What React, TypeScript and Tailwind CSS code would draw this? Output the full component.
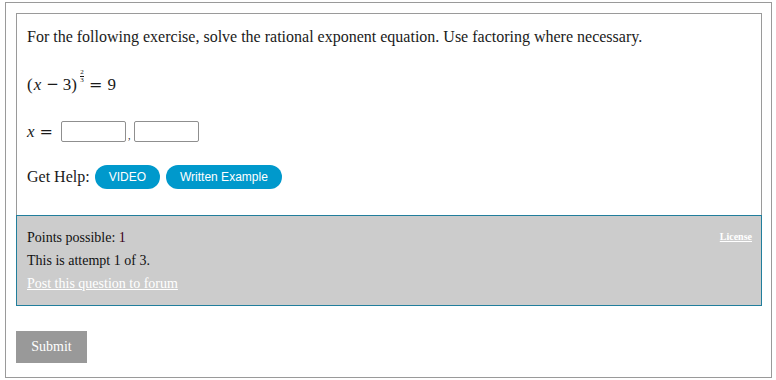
import React from "react";

export default function App() {
  return (
    <div className="bg-white w-[776px] h-[380px] pt-[2px] pl-[5px] font-['Liberation_Serif','Times_New_Roman',serif]">
      <div className="w-[767px] h-[376px] border border-[#9a9a9a] pt-[10px] pl-[10px]">
        <div className="w-[746px] border-t border-x border-[#9a9a9a]">
          <div className="px-[10px] pt-[14px] pb-[26px] text-[#1a1a1a]">
            <p className="text-[16px] leading-[18px] h-[18px] whitespace-nowrap">
              For the following exercise, solve the rational exponent equation. Use factoring where necessary.
            </p>

            {/* math line */}
            <div className="mt-[26px] h-[24px] flex items-center text-[17px] leading-[17px] whitespace-nowrap">
              <span>(</span>
              <span className="italic ml-[1px]">x</span>
              <span className="ml-[5px] text-[15px] font-['DejaVu_Serif',serif]">−</span>
              <span className="ml-[4px]">3</span>
              <span>)</span>
              <span className="ml-[3px] flex flex-col items-center -translate-y-[8px] text-[7px] leading-[7px]">
                <span>2</span>
                <span className="w-[4px] h-px bg-[#1a1a1a]" />
                <span>3</span>
              </span>
              <span className="ml-[5px] text-[16px] font-['DejaVu_Serif',serif]">=</span>
              <span className="ml-[5px]">9</span>
            </div>

            {/* answer line */}
            <div className="mt-[25px] h-[21px] flex items-center text-[17px] whitespace-nowrap">
              <span className="italic">x</span>
              <span className="ml-[5px] text-[16px] font-['DejaVu_Serif',serif]">=</span>
              <div className="ml-[8px] w-[65px] h-[21px] border border-[#8f8f8f] rounded-[2px] bg-white" />
              <span className="ml-[2px] self-end text-[10px] leading-[10px] mb-[1px]">,</span>
              <div className="ml-[4px] w-[65px] h-[21px] border border-[#8f8f8f] rounded-[2px] bg-white" />
            </div>

            {/* help line */}
            <div className="mt-[23px] h-[24px] flex items-center whitespace-nowrap">
              <span className="text-[16px] leading-[18px]">Get Help:</span>
              <button className="ml-[5px] h-[24px] px-[14px] rounded-full bg-[#0099cc] text-white text-[12px] leading-[24px] font-['Liberation_Sans',Arial,sans-serif]">
                VIDEO
              </button>
              <button className="ml-[6px] h-[24px] px-[14px] rounded-full bg-[#0099cc] text-white text-[12px] leading-[24px] font-['Liberation_Sans',Arial,sans-serif]">
                Written Example
              </button>
            </div>
          </div>

          {/* info panel */}
          <div className="-mx-px w-[746px] h-[91px] border border-[#217e9c] bg-[#cccccc] pt-[10px] pl-[10px] pr-[9px] text-[14px] leading-[23px] text-[#111]">
            <div className="flex justify-between items-baseline">
              <span>
                Points possible: <span className="text-[#3a0018]">1</span>
              </span>
              <a className="text-white underline font-bold text-[10px] leading-[10px] -translate-y-[2px]" href="#">
                License
              </a>
            </div>
            <p>This is attempt 1 of 3.</p>
            <p>
              <a className="text-white underline" href="#">
                Post this question to forum
              </a>
            </p>
          </div>
        </div>

        <button className="mt-[25px] w-[71px] h-[32px] bg-[#999999] text-white text-[14px] leading-[32px] font-['Liberation_Serif',serif]">
          Submit
        </button>
      </div>
    </div>
  );
}
